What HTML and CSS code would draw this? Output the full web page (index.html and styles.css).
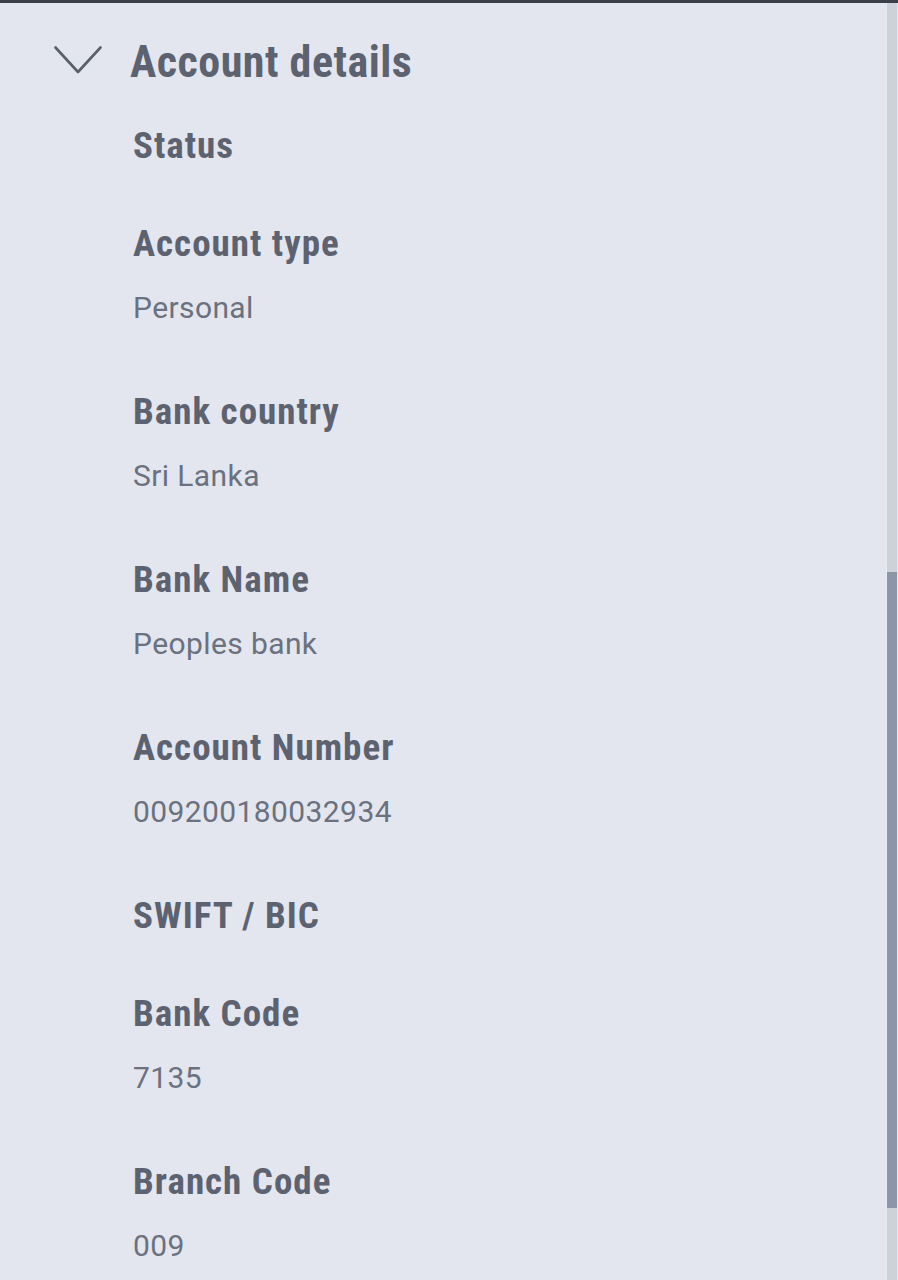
FILE: index.html
```html
<!DOCTYPE html>
<html lang="en">
<head>
<meta charset="utf-8">
<title>Account details</title>
<link rel="stylesheet" href="styles.css">
</head>
<body>
<div class="topbar"></div>
<div class="frame">
  <main class="panel">
    <div class="section-head">
      <svg class="chevron" width="48" height="28" viewBox="0 0 48 28" aria-hidden="true">
        <polyline points="1.5,1.5 24,26 46.5,1.5" fill="none" stroke="#5a5f6a" stroke-width="2.6" stroke-linecap="round" stroke-linejoin="round"/>
      </svg>
      <h2 class="section-title">Account details</h2>
    </div>
    <dl class="details">
      <div class="item"><dt class="label">Status</dt></div>
      <div class="item"><dt class="label">Account type</dt><dd class="value">Personal</dd></div>
      <div class="item"><dt class="label">Bank country</dt><dd class="value">Sri Lanka</dd></div>
      <div class="item"><dt class="label">Bank Name</dt><dd class="value">Peoples bank</dd></div>
      <div class="item"><dt class="label">Account Number</dt><dd class="value">009200180032934</dd></div>
      <div class="item"><dt class="label">SWIFT / BIC</dt></div>
      <div class="item"><dt class="label">Bank Code</dt><dd class="value">7135</dd></div>
      <div class="item"><dt class="label">Branch Code</dt><dd class="value">009</dd></div>
    </dl>
  </main>
  <div class="scroll-track"><div class="scroll-thumb"></div></div>
</div>
</body>
</html>
```
FILE: styles.css
```css
html, body {
  margin: 0;
  padding: 0;
}
body {
  background: #e3e6ee;
  font-family: "Roboto", "Liberation Sans", sans-serif;
  color: #5e6370;
  width: 898px;
  height: 1280px;
  overflow: hidden;
}
.topbar {
  height: 3px;
  background: #3b3f47;
}
.frame {
  display: flex;
  height: 1277px;
}
.panel {
  width: 887px;
  box-sizing: border-box;
  border-right: 1px solid #e9ebf1;
  padding-top: 31px;
}
.section-head {
  display: flex;
  align-items: center;
  height: 56px;
}
.chevron {
  margin-left: 54px;
  margin-right: 28px;
  margin-top: -4px;
}
.section-title {
  margin: 0;
  font-family: "Roboto Condensed", "Roboto", sans-serif;
  font-stretch: condensed;
  font-size: 44px;
  line-height: 56px;
  font-weight: 700;
  letter-spacing: 0.5px;
  color: #5d6270;
}
.details {
  margin: 32px 0 0 133px;
  padding: 0;
}
.item {
  padding-bottom: 50px;
}
.label {
  font-family: "Roboto Condensed", "Roboto", sans-serif;
  font-stretch: condensed;
  font-size: 37px;
  line-height: 48px;
  font-weight: 700;
  letter-spacing: 1px;
  color: #5d6270;
}
.value {
  margin: 20px 0 10px 0;
  font-family: "Roboto", sans-serif;
  font-size: 30px;
  line-height: 40px;
  font-weight: 400;
  letter-spacing: 0.4px;
  color: #6b717e;
}
.scroll-track {
  width: 10px;
  background: #cdd1da;
  padding-top: 569px;
  box-sizing: border-box;
}
.scroll-thumb {
  height: 636px;
  background: #8c96a8;
}
```
